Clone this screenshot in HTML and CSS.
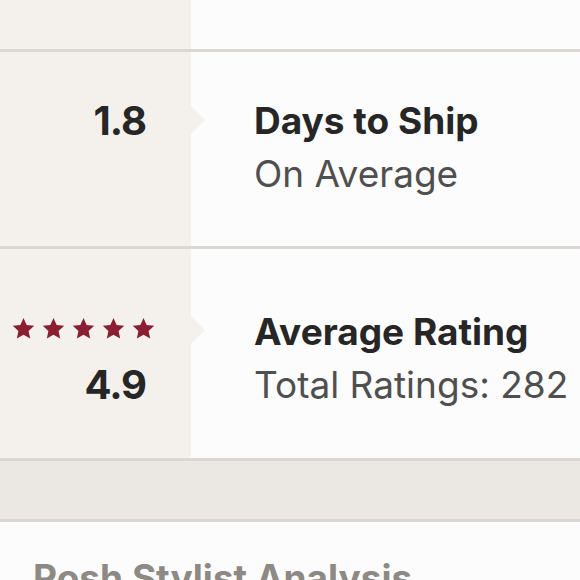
FILE: index.html
```html
<!DOCTYPE html>
<html>
<head>
<meta charset="utf-8">
<link rel="stylesheet" href="styles.css">
</head>
<body>
<div class="page">
  <div class="row row-top">
    <div class="left"></div>
    <div class="right"></div>
  </div>
  <div class="rule"></div>
  <div class="row row-ship">
    <div class="left">
      <div class="num">1.8</div>
      <span class="pointer"></span>
    </div>
    <div class="right">
      <div class="title">Days to Ship</div>
      <div class="sub">On Average</div>
    </div>
  </div>
  <div class="rule"></div>
  <div class="row row-rating">
    <div class="left">
      <div class="stars">
        <svg class="star" viewBox="0 0 24 24"><polygon points="12,1 15.29,8.27 23.22,9.15 17.33,14.53 18.94,22.35 12,18.4 5.06,22.35 6.67,14.53 0.78,9.15 8.71,8.27"/></svg>
        <svg class="star" viewBox="0 0 24 24"><polygon points="12,1 15.29,8.27 23.22,9.15 17.33,14.53 18.94,22.35 12,18.4 5.06,22.35 6.67,14.53 0.78,9.15 8.71,8.27"/></svg>
        <svg class="star" viewBox="0 0 24 24"><polygon points="12,1 15.29,8.27 23.22,9.15 17.33,14.53 18.94,22.35 12,18.4 5.06,22.35 6.67,14.53 0.78,9.15 8.71,8.27"/></svg>
        <svg class="star" viewBox="0 0 24 24"><polygon points="12,1 15.29,8.27 23.22,9.15 17.33,14.53 18.94,22.35 12,18.4 5.06,22.35 6.67,14.53 0.78,9.15 8.71,8.27"/></svg>
        <svg class="star" viewBox="0 0 24 24"><polygon points="12,1 15.29,8.27 23.22,9.15 17.33,14.53 18.94,22.35 12,18.4 5.06,22.35 6.67,14.53 0.78,9.15 8.71,8.27"/></svg>
      </div>
      <div class="num">4.9</div>
      <span class="pointer"></span>
    </div>
    <div class="right">
      <div class="title">Average Rating</div>
      <div class="sub">Total Ratings: 282</div>
    </div>
  </div>
  <div class="rule"></div>
  <div class="band"></div>
  <div class="rule"></div>
  <div class="analysis">
    <h2 class="analysis-title">Posh Stylist Analysis</h2>
  </div>
</div>
</body>
</html>
```

FILE: styles.css
```css
* { box-sizing: border-box; }
html, body { margin: 0; padding: 0; }
body {
  background: #fcfcfc;
  font-family: Inter, "Noto Sans", sans-serif;
  color: #2b2b2b;
  overflow: hidden;
}
.page { width: 580px; }
.row { display: flex; }
.left {
  position: relative;
  width: 191px;
  flex: 0 0 191px;
  background: #f4f1ed;
  display: flex;
  flex-direction: column;
  align-items: flex-end;
  padding-right: 45px;
}
.right {
  flex: 1;
  background: #fcfcfc;
  padding-left: 63px;
}
.row-top { height: 49px; }
.row-ship { height: 194px; }
.row-rating { height: 209px; }
.rule { height: 3px; background: #dbd8d4; }
.row-ship .left, .row-ship .right { padding-top: 42px; }
.row-rating .left { padding-top: 68px; }
.row-rating .right { padding-top: 56px; }
.num {
  font-size: 40px;
  font-weight: 700;
  line-height: 53px;
  color: #262626;
  letter-spacing: -1px;
}
.title {
  font-size: 37px;
  font-weight: 700;
  line-height: 53px;
  color: #262626;
}
.sub {
  font-size: 37px;
  font-weight: 400;
  line-height: 53px;
  color: #4f4f4f;
}
.pointer {
  position: absolute;
  right: -14px;
  width: 0;
  height: 0;
  border-top: 14px solid transparent;
  border-bottom: 14px solid transparent;
  border-left: 14px solid #f4f1ed;
}
.row-ship .pointer { top: 54px; }
.row-rating .pointer { top: 67px; }
.stars {
  display: flex;
  gap: 7px;
  margin-right: -9px;
  height: 23px;
}
.star { width: 23px; height: 23px; fill: #8a1f33; }
.row-rating .num { margin-top: 18px; }
.band {
  height: 58px;
  background: #ebe8e4;
}
.analysis {
  background: #fcfcfc;
  padding: 29px 0 0 33px;
}
.analysis-title {
  margin: 0;
  font-size: 37px;
  font-weight: 700;
  line-height: 53px;
  color: #8d8984;
  white-space: nowrap;
}
```
